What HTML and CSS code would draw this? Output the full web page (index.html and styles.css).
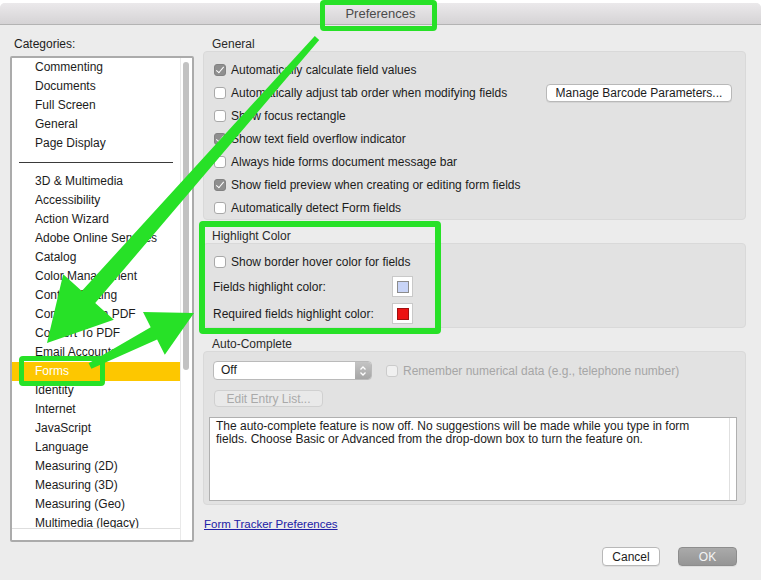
FILE: index.html
```html
<!DOCTYPE html>
<html lang="en">
<head>
    <meta charset="UTF-8">
    <meta name="viewport" content="width=device-width, initial-scale=1.0">
    <link rel="stylesheet" href="styles.css">
    <title>Preferences</title>
</head>
<body>
    <div class="stage">
        <div class="window">
            <header class="titlebar"><span class="title">Preferences</span></header>
            <div class="content">
                <aside class="sidebar">
                    <div class="caption">Categories:</div>
                    <div class="listbox">
                        <div class="list-main">
                            <ul class="cats">
                                <li>Commenting</li>
                                <li>Documents</li>
                                <li>Full Screen</li>
                                <li>General</li>
                                <li>Page Display</li>
                                <li class="sep"></li>
                                <li>3D &amp; Multimedia</li>
                                <li>Accessibility</li>
                                <li>Action Wizard</li>
                                <li>Adobe Online Services</li>
                                <li>Catalog</li>
                                <li>Color Management</li>
                                <li>Content Editing</li>
                                <li>Convert From PDF</li>
                                <li>Convert To PDF</li>
                                <li>Email Accounts</li>
                                <li class="selected">Forms</li>
                                <li>Identity</li>
                                <li>Internet</li>
                                <li>JavaScript</li>
                                <li>Language</li>
                                <li>Measuring (2D)</li>
                                <li>Measuring (3D)</li>
                                <li>Measuring (Geo)</li>
                                <li>Multimedia (legacy)</li>
                            </ul>
                        </div>
                        <div class="scroll"><div class="thumb"></div></div>
                    </div>
                </aside>

                <main class="panes">
                    <section class="group">
                        <h3 class="group-title">General</h3>
                        <div class="panel general">
                            <div class="row"><span class="cb checked"></span>Automatically calculate field values</div>
                            <div class="row row-split">
                                <span class="row-label"><span class="cb"></span>Automatically adjust tab order when modifying fields</span>
                                <button class="btn btn-wide">Manage Barcode Parameters...</button>
                            </div>
                            <div class="row"><span class="cb"></span>Show focus rectangle</div>
                            <div class="row"><span class="cb checked"></span>Show text field overflow indicator</div>
                            <div class="row"><span class="cb"></span>Always hide forms document message bar</div>
                            <div class="row"><span class="cb checked"></span>Show field preview when creating or editing form fields</div>
                            <div class="row"><span class="cb"></span>Automatically detect Form fields</div>
                        </div>
                    </section>

                    <section class="group group-next">
                        <h3 class="group-title">Highlight Color</h3>
                        <div class="panel highlight">
                            <div class="row"><span class="cb"></span>Show border hover color for fields</div>
                            <div class="row row-color">
                                <span class="color-label">Fields highlight color:</span>
                                <span class="swatch"><span class="swatch-blue"></span></span>
                            </div>
                            <div class="row row-color">
                                <span class="color-label">Required fields highlight color:</span>
                                <span class="swatch"><span class="swatch-red"></span></span>
                            </div>
                        </div>
                    </section>

                    <section class="group group-next">
                        <h3 class="group-title">Auto-Complete</h3>
                        <div class="panel auto">
                            <div class="auto-top">
                                <div class="select">
                                    <span class="select-value">Off</span>
                                    <span class="stepper">
                                        <svg width="8" height="12" viewBox="0 0 8 12"><path d="M1.5 4.5 L4 2 L6.5 4.5 M1.5 7.5 L4 10 L6.5 7.5" fill="none" stroke="#fff" stroke-width="1.3"/></svg>
                                    </span>
                                </div>
                                <span class="row-disabled"><span class="cb cb-disabled"></span>Remember numerical data (e.g., telephone number)</span>
                            </div>
                            <button class="btn btn-disabled">Edit Entry List...</button>
                            <div class="textbox">
                                <p>The auto-complete feature is now off. No suggestions will be made while you type in form fields. Choose Basic or Advanced from the drop-down box to turn the feature on.</p>
                                <div class="textbox-scroll"></div>
                            </div>
                        </div>
                    </section>

                    <a href="#" class="link">Form Tracker Preferences</a>

                    <div class="actions">
                        <button class="btn">Cancel</button>
                        <button class="btn btn-ok">OK</button>
                    </div>
                </main>
            </div>
        </div>

        <!-- annotation overlay -->
        <div class="mark mark-title"></div>
        <div class="mark mark-highlight"></div>
        <div class="mark mark-forms"></div>
        <svg class="arrows" width="761" height="580" viewBox="0 0 761 580">
            <polygon points="314.8,36 81.8,291 63.2,274.2 47,343 113.8,319.8 95.2,303 319.2,40"/>
            <polygon points="88.6,363.3 150.7,327.2 143,312 194,313 164.8,354.8 157.1,339.6 91.4,368.7"/>
        </svg>
    </div>
</body>
</html>
```

FILE: styles.css
```css
* {
    margin: 0;
    padding: 0;
    box-sizing: border-box;
}
body {
    background: #fff;
    font-family: "Liberation Sans", Arial, sans-serif;
    font-size: 12px;
    color: #1c1c1c;
}
.stage {
    position: relative;
    width: 761px;
    height: 580px;
    padding-top: 3px;
    overflow: hidden;
}
.window {
    width: 761px;
    height: 577px;
    background: #ececec;
    border-radius: 5px 5px 0 0;
    overflow: hidden;
}
.titlebar {
    height: 22px;
    background: linear-gradient(#ebe9eb, #d5d3d5);
    border-bottom: 1px solid #b3b3b3;
    display: flex;
    justify-content: center;
    align-items: center;
}
.title {
    font-size: 13px;
    color: #4b4b4b;
}
.content {
    display: flex;
    gap: 9px;
    padding: 12px 15px 0 10px;
}

/* categories */
.sidebar {
    width: 184px;
}
.caption {
    line-height: 14px;
    margin: 0 0 5px 4px;
}
.listbox {
    display: flex;
    height: 486px;
    background: #fff;
    border: 2px solid #ababab;
    border-radius: 2px;
}
.list-main {
    flex: 1;
    height: 471px;
    overflow: hidden;
    border-bottom: 1px solid #dedede;
}
.cats li {
    list-style: none;
    height: 19px;
    line-height: 19px;
    padding-left: 23px;
    white-space: nowrap;
}
.cats .sep {
    height: 1px;
    margin: 9px 7px 9px 7px;
    background: #3a3a3a;
}
.cats .selected {
    background: #fdc700;
    color: #fff;
}
.scroll {
    width: 12px;
    border-left: 1px solid #e9e9e9;
}
.thumb {
    width: 6px;
    height: 308px;
    margin: 4px 0 0 2px;
    background: #c2c2c2;
    border-radius: 3px;
}

/* right side */
.panes {
    width: 543px;
}
.group-title {
    font-weight: normal;
    font-size: 12px;
    line-height: 14px;
    margin-left: 9px;
    color: #2a2a2a;
}
.group-next {
    margin-top: 9px;
}
.panel {
    background: #e2e2e2;
    border: 1px solid #d9d9d9;
    border-radius: 4px;
}
.general {
    padding: 6px 0 0 10px;
}
.row {
    display: flex;
    align-items: center;
    height: 23px;
    white-space: nowrap;
}
.row-split {
    justify-content: space-between;
    padding-right: 13px;
}
.row-label {
    display: flex;
    align-items: center;
}
.cb {
    position: relative;
    width: 12px;
    height: 12px;
    margin-right: 5px;
    background: #fff;
    border: 1px solid #a9a9a9;
    border-radius: 3px;
    flex-shrink: 0;
}
.cb.checked {
    background: #8f8f8f;
    border-color: #828282;
}
.cb.checked::after {
    content: "";
    position: absolute;
    left: 3px;
    top: 0px;
    width: 3px;
    height: 7px;
    border: solid #fff;
    border-width: 0 1.6px 1.6px 0;
    transform: rotate(40deg);
}
.cb-disabled {
    background: #f0f0f0;
    border-color: #cbcbcb;
}

.btn {
    font-family: "Liberation Sans", Arial, sans-serif;
    font-size: 12px;
    color: #1c1c1c;
    height: 19px;
    background: #fff;
    border: 1px solid #b8b8b8;
    border-radius: 4px;
    box-shadow: 0 1px 0 rgba(0, 0, 0, 0.06);
}
.btn-wide {
    width: 186px;
    height: 18px;
}

.highlight {
    padding: 6px 0 0 10px;
}
.row-color {
    height: 27px;
    margin-left: -1px;
}
.color-label {
    width: 179px;
}
.swatch {
    width: 21px;
    height: 21px;
    background: #fff;
    border: 1px solid #c9c9c9;
    display: flex;
    align-items: center;
    justify-content: center;
}
.swatch span {
    width: 12px;
    height: 12px;
    border: 1px solid #8c8c8c;
}
.swatch .swatch-blue {
    background: #c8d4f7;
}
.swatch .swatch-red {
    background: #ec1212;
    border-color: #a01010;
}

.auto {
    padding: 9px 8px 3px 5px;
}
.auto-top {
    display: flex;
    align-items: center;
}
.select {
    display: flex;
    justify-content: space-between;
    width: 159px;
    height: 19px;
    margin-left: 4px;
    background: #fff;
    border: 1px solid #bababa;
    border-radius: 4px;
    overflow: hidden;
}
.select-value {
    line-height: 17px;
    padding-left: 7px;
}
.stepper {
    width: 16px;
    background: linear-gradient(#c4c4c4, #a6a6a6);
    display: flex;
    align-items: center;
    justify-content: center;
}
.row-disabled {
    display: flex;
    align-items: center;
    margin-left: 14px;
    color: #a6a6a6;
    white-space: nowrap;
}
.btn-disabled {
    display: block;
    width: 109px;
    height: 17px;
    margin: 10px 0 0 5px;
    background: #e9e9e9;
    border-color: #d0d0d0;
    color: #a9a9a9;
    box-shadow: none;
}
.textbox {
    display: flex;
    height: 84px;
    margin-top: 10px;
    background: #fff;
    border: 1px solid #b0b0b0;
}
.textbox p {
    flex: 1;
    padding: 2px 8px 0 6px;
    line-height: 13px;
}
.textbox-scroll {
    width: 7px;
    border-left: 1px solid #e0e0e0;
}

.link {
    display: inline-block;
    margin: 13px 0 0 1px;
    font-size: 11.5px;
    line-height: 13px;
    color: #2020a6;
}
.actions {
    display: flex;
    justify-content: flex-end;
    gap: 18px;
    margin-top: 16px;
    padding-right: 9px;
}
.actions .btn {
    width: 58px;
}
.actions .btn-ok {
    width: 59px;
    background: linear-gradient(#aaaaaa, #959595);
    border-color: #8d8d8d;
    color: #f4f4f4;
}

/* annotation overlay */
.mark {
    position: absolute;
    border: 5px solid #27e127;
    border-radius: 4px;
}
.mark-title {
    left: 320px;
    top: 0;
    width: 117px;
    height: 31px;
}
.mark-highlight {
    left: 199px;
    top: 221px;
    width: 242px;
    height: 113px;
    border-width: 6px;
}
.mark-forms {
    left: 19px;
    top: 356px;
    width: 86px;
    height: 30px;
}
.arrows {
    position: absolute;
    left: 0;
    top: 0;
    fill: #27e127;
}
```
